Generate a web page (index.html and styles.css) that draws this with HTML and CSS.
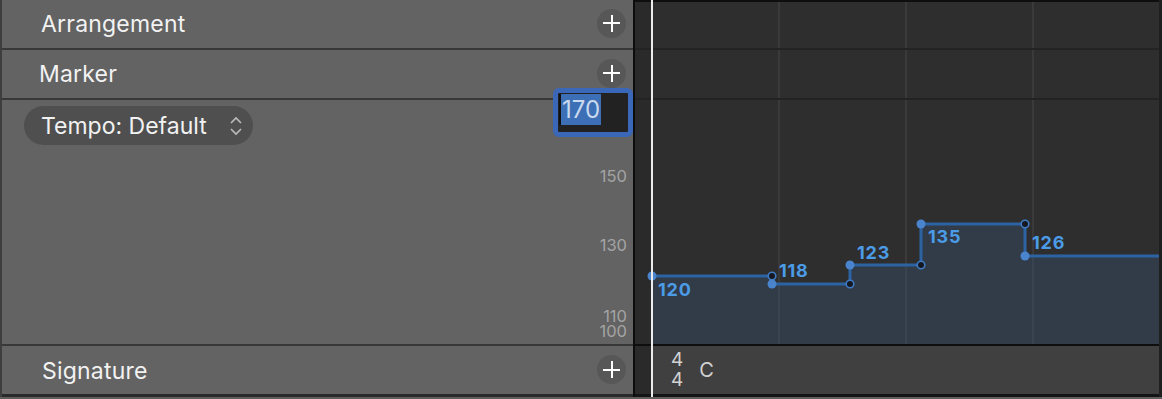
FILE: index.html
```html
<!DOCTYPE html>
<html lang="en">
<head>
    <meta charset="UTF-8">
    <title>Global Tracks - Tempo</title>
    <link rel="stylesheet" href="styles.css">
</head>
<body>
    <div class="editor">
        <!-- track headers -->
        <div class="headers">
            <div class="header-row">
                <span class="track-name name-arr">Arrangement</span>
                <button class="add-btn" type="button"><span class="plus"></span></button>
            </div>
            <div class="header-row">
                <span class="track-name name-marker">Marker</span>
                <button class="add-btn" type="button"><span class="plus"></span></button>
            </div>
            <div class="header-row tempo-header">
                <div class="tempo-popup">
                    <span>Tempo: Default</span>
                    <svg class="updown" width="14" height="22" viewBox="0 0 14 22">
                        <path d="M2 8 L7 3 L12 8" />
                        <path d="M2 14 L7 19 L12 14" />
                    </svg>
                </div>
                <div class="value-edit">
                    <span class="caret"></span>
                    <span class="selected">170</span>
                </div>
                <span class="scale-label" style="top: 70px">150</span>
                <span class="scale-label" style="top: 139px">130</span>
                <span class="scale-label" style="top: 210px">110</span>
                <span class="scale-label" style="top: 225px">100</span>
            </div>
            <div class="header-row signature-header">
                <span class="track-name">Signature</span>
                <button class="add-btn" type="button"><span class="plus"></span></button>
            </div>
        </div>

        <div class="divider"></div>

        <!-- track lanes -->
        <div class="tracks">
            <div class="lane-row first">
                <div class="strip"></div>
                <div class="lane grid"></div>
            </div>
            <div class="lane-row">
                <div class="strip"></div>
                <div class="lane grid"></div>
            </div>
            <div class="lane-row tempo-row">
                <div class="strip"></div>
                <div class="lane grid tempo-lane">
                    <svg class="tempo-graph" width="508" height="244" viewBox="0 0 508 244">
                        <path class="area" d="M1 176 H121 V184 H199 V165 H270 V124 H374 V156 H508 V244 H1 Z" />
                        <path class="curve" d="M1 176 H121 V184 H199 V165 H270 V124 H374 V156 H508" />
                        <circle class="pt" cx="1" cy="176" r="4.5" />
                        <circle class="pt-open" cx="121" cy="176" r="3.8" />
                        <circle class="pt" cx="121" cy="184" r="4.5" />
                        <circle class="pt-open" cx="199" cy="184" r="3.8" />
                        <circle class="pt" cx="199" cy="165" r="4.5" />
                        <circle class="pt-open" cx="270" cy="165" r="3.8" />
                        <circle class="pt" cx="270" cy="124" r="4.5" />
                        <circle class="pt-open" cx="374" cy="124" r="3.8" />
                        <circle class="pt" cx="374" cy="156" r="4.5" />
                        <text class="val" x="7" y="196">120</text>
                        <text class="val" x="128" y="177">118</text>
                        <text class="val" x="206" y="159">123</text>
                        <text class="val" x="277" y="143">135</text>
                        <text class="val" x="381" y="149">126</text>
                    </svg>
                </div>
            </div>
            <div class="lane-row signature-row">
                <div class="strip"></div>
                <div class="lane sig-lane">
                    <div class="time-sig"><span>4</span><span>4</span></div>
                    <span class="key">C</span>
                </div>
            </div>
            <div class="playhead"></div>
        </div>
    </div>
    <div class="bottom-edge"></div>
</body>
</html>
```

FILE: styles.css
```css
* {
    box-sizing: border-box;
}

body {
    margin: 0;
    background-color: #5e5e5e;
    font-family: Inter, "Noto Sans", sans-serif;
    overflow: hidden;
}

.editor {
    display: flex;
    height: 397px;
}

.headers {
    width: 633px;
    background-color: #636363;
    border-left: 2px solid #3e3e3e;
    display: flex;
    flex-direction: column;
}

.header-row {
    height: 50px;
    border-bottom: 2px solid #383838;
    display: flex;
    align-items: center;
    justify-content: space-between;
    padding: 0 7px 0 39px;
}

.track-name {
    color: #f2f2f2;
    font-size: 23px;
    letter-spacing: 0.2px;
}

.name-marker {
    margin-left: -2px;
}

.add-btn {
    width: 29px;
    height: 29px;
    border: none;
    border-radius: 50%;
    background-color: #575757;
    position: relative;
    padding: 0;
    margin-top: -2px;
}

.plus::before,
.plus::after {
    content: "";
    position: absolute;
    background-color: #fff;
    left: 50%;
    top: 50%;
}

.plus::before {
    width: 17px;
    height: 2px;
    margin: -1px 0 0 -8.5px;
}

.plus::after {
    width: 2px;
    height: 17px;
    margin: -8.5px 0 0 -1px;
}

.tempo-header {
    height: 246px;
    position: relative;
    align-items: flex-start;
    padding: 6px 0 0 22px;
}

.tempo-popup {
    height: 39px;
    width: 229px;
    border-radius: 20px;
    background-color: #4f4f4f;
    display: flex;
    align-items: center;
    justify-content: space-between;
    padding: 0 10px 0 17px;
    color: #f2f2f2;
    font-size: 23px;
}

.updown path {
    fill: none;
    stroke: #bcbcbc;
    stroke-width: 1.6;
}

.value-edit {
    position: absolute;
    left: 551px;
    top: -12px;
    width: 80px;
    height: 49px;
    border: 5px solid #3b67b8;
    border-radius: 6px;
    background-color: #222;
    padding: 1px 0 0 1px;
    display: flex;
}

.caret {
    width: 2px;
    height: 31px;
    background-color: #111;
}

.selected {
    height: 31px;
    padding: 0 1px;
    background-color: #3d6fb6;
    color: #c9d9ee;
    font-size: 24px;
    line-height: 31px;
}

.scale-label {
    position: absolute;
    right: 6px;
    color: #a4a4a4;
    font-size: 16.5px;
    line-height: 13px;
}

.signature-header {
    height: 51px;
    border-bottom: 3px solid #2a2a2a;
    padding-top: 1px;
}

.signature-header .track-name {
    margin-left: 1px;
}

.divider {
    width: 2px;
    background-color: #0c0c0c;
}

.tracks {
    flex: 1;
    position: relative;
    background-color: #2e2e2e;
    display: flex;
    flex-direction: column;
    border-right: 3px solid #1f1f1f;
}

.lane-row {
    height: 50px;
    display: flex;
    border-bottom: 2px solid #232323;
}

.lane-row.first {
    border-top: 2px solid #0e0e0e;
}

.strip {
    width: 16px;
    background-color: #2a2a2a;
}

.lane {
    flex: 1;
    background-color: #2e2e2e;
}

.grid {
    background-image: repeating-linear-gradient(90deg, transparent 0 125px, #3a3a3a 125px 127px);
    background-position: 2px 0;
}

.tempo-row {
    height: 246px;
    border-bottom: 2px solid #0e0e0e;
}

.tempo-lane {
    position: relative;
}

.tempo-graph {
    display: block;
    overflow: visible;
}

.area {
    fill: rgba(58, 84, 118, 0.36);
}

.curve {
    fill: none;
    stroke: #2c63a3;
    stroke-width: 3;
}

.pt {
    fill: #4a84cc;
}

.pt-open {
    fill: #15191f;
    stroke: #3f7bc4;
    stroke-width: 1.6;
}

.val {
    fill: #4b9be6;
    font-family: Inter, "Noto Sans", sans-serif;
    font-weight: 700;
    font-size: 18px;
    letter-spacing: 0.8px;
}

.signature-row {
    height: 51px;
    border-bottom: 3px solid #141414;
}

.sig-lane {
    background-color: #404040;
    display: flex;
    align-items: center;
    padding-left: 20px;
    color: #d2d2d2;
}

.time-sig {
    display: flex;
    flex-direction: column;
    align-items: center;
    font-size: 19px;
    line-height: 20px;
    margin-top: -1px;
}

.key {
    margin-left: 16px;
    font-size: 20px;
}

.playhead {
    position: absolute;
    left: 16px;
    top: 0;
    bottom: 0;
    width: 2px;
    background-color: #ececec;
}

.bottom-edge {
    height: 2px;
    background-color: #5f5f5f;
}
```
